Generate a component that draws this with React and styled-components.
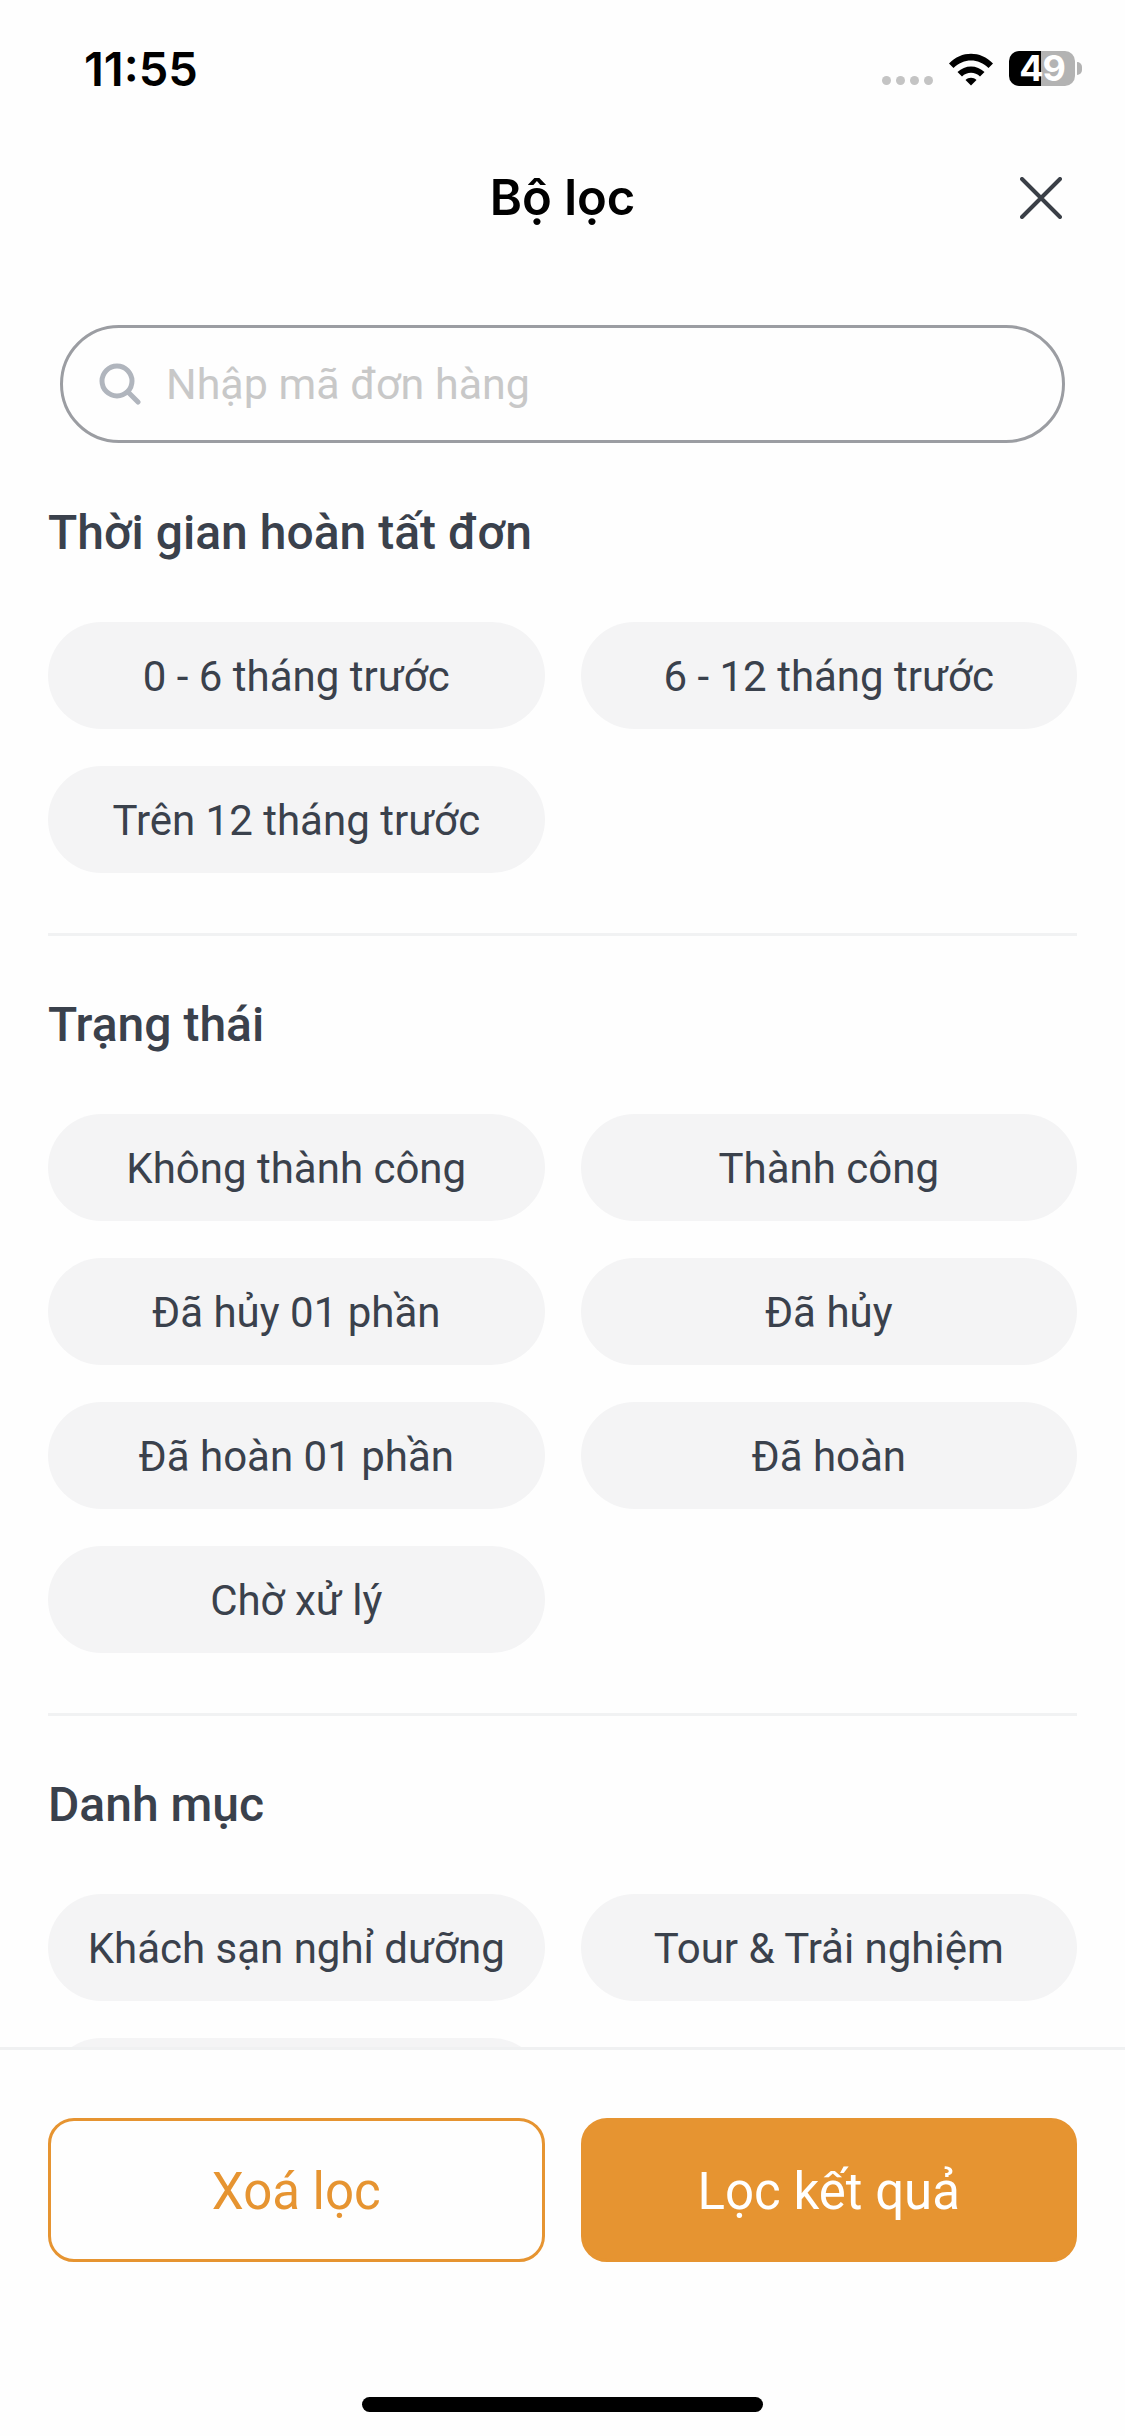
import React from "react";
import styled, { createGlobalStyle } from "styled-components";

const sections = [
	{
		title: "Thời gian hoàn tất đơn",
		chips: ["0 - 6 tháng trước", "6 - 12 tháng trước", "Trên 12 tháng trước"],
	},
	{
		title: "Trạng thái",
		chips: [
			"Không thành công",
			"Thành công",
			"Đã hủy 01 phần",
			"Đã hủy",
			"Đã hoàn 01 phần",
			"Đã hoàn",
			"Chờ xử lý",
		],
	},
	{
		title: "Danh mục",
		chips: ["Khách sạn nghỉ dưỡng", "Tour & Trải nghiệm", ""],
	},
];

const App = () => {
	return (
		<Screen>
			<GlobalStyle />
			<StatusBar>
				<Clock>11:55</Clock>
				<StatusIcons>
					<SignalDots>
						<Dot />
						<Dot />
						<Dot />
						<Dot />
					</SignalDots>
					<svg width="46" height="34" viewBox="0 0 46 34">
						<path d="M1 11.5C13.5 -1.5 32.5 -1.5 45 11.5L40.5 16C30.5 6 15.500 6 5.500 16Z" fill="#000" />
						<path d="M9.500 20C17 12.500 29 12.500 36.500 20L32 24.500C27 19.500 19 19.500 14 24.500Z" fill="#000" />
						<path d="M17.500 28C20.500 25 25.500 25 28.500 28L23 33.500Z" fill="#000" />
					</svg>
					<Battery>
						<BatteryBody>49</BatteryBody>
						<BatteryNub />
					</Battery>
				</StatusIcons>
			</StatusBar>

			<Header>
				<span />
				<Title>Bộ lọc</Title>
				<CloseButton>
					<svg width="42" height="42" viewBox="0 0 42 42">
						<path d="M2 2L40 40M40 2L2 40" stroke="#3a3f47" strokeWidth="4" strokeLinecap="round" />
					</svg>
				</CloseButton>
			</Header>

			<SearchBox>
				<svg width="42" height="42" viewBox="0 0 42 42" fill="none">
					<circle cx="18" cy="18" r="15" stroke="#b0b5bd" strokeWidth="5" />
					<path d="M29 29L39 39" stroke="#b0b5bd" strokeWidth="5" strokeLinecap="round" />
				</svg>
				<Placeholder>Nhập mã đơn hàng</Placeholder>
			</SearchBox>

			<Scroll>
				{sections.map((section) => (
					<Section key={section.title}>
						<SectionTitle>{section.title}</SectionTitle>
						<Chips>
							{section.chips.map((chip, i) => (
								<Chip key={i}>{chip}</Chip>
							))}
						</Chips>
					</Section>
				))}
			</Scroll>

			<Footer>
				<Actions>
					<ClearButton>Xoá lọc</ClearButton>
					<ApplyButton>Lọc kết quả</ApplyButton>
				</Actions>
				<HomeBar />
			</Footer>
		</Screen>
	);
};

const GlobalStyle = createGlobalStyle`
	html, body {
		margin: 0;
		padding: 0;
		background: #fefefe;
	}
	* {
		box-sizing: border-box;
	}
`;

const Screen = styled.div`
	width: 1125px;
	height: 2436px;
	display: flex;
	flex-direction: column;
	overflow: hidden;
	background: #fefefe;
	font-family: Roboto, "Noto Sans", sans-serif;
	color: #3a414c;
`;

const StatusBar = styled.div`
	height: 130px;
	flex-shrink: 0;
	display: flex;
	justify-content: space-between;
	align-items: flex-start;
	padding: 40px 43px 0 84px;
`;

const Clock = styled.div`
	font-family: Inter, sans-serif;
	font-weight: 600;
	font-size: 47px;
	line-height: 58px;
	color: #000;
`;

const StatusIcons = styled.div`
	display: flex;
	align-items: center;
	gap: 15px;
	margin-top: 11px;
`;

const SignalDots = styled.div`
	display: flex;
	gap: 5px;
	margin-top: 24px;
`;

const Dot = styled.span`
	width: 9px;
	height: 9px;
	border-radius: 50%;
	background: #c4c4c4;
`;

const Battery = styled.div`
	display: flex;
	align-items: center;
	gap: 2px;
`;

const BatteryBody = styled.div`
	width: 66px;
	height: 35px;
	border-radius: 10px;
	background: linear-gradient(to right, #000 32px, #b3b3b3 32px);
	color: #fff;
	font-family: Inter, sans-serif;
	font-weight: 700;
	font-size: 36px;
	letter-spacing: -1px;
	line-height: 35px;
	text-align: center;
`;

const BatteryNub = styled.span`
	width: 5px;
	height: 13px;
	border-radius: 0 5px 5px 0;
	background: #b3b3b3;
`;

const Header = styled.div`
	height: 135px;
	flex-shrink: 0;
	display: grid;
	grid-template-columns: 1fr auto 1fr;
	align-items: center;
	padding: 0 63px;
`;

const Title = styled.h1`
	margin: 0;
	font-family: Inter, sans-serif;
	font-weight: 600;
	font-size: 49px;
	color: #000;
`;

const CloseButton = styled.div`
	display: flex;
	justify-content: flex-end;
`;

const SearchBox = styled.div`
	flex-shrink: 0;
	width: 1005px;
	height: 118px;
	margin: 60px 0 0 60px;
	padding-left: 36px;
	display: flex;
	align-items: center;
	gap: 25px;
	border: 3px solid #9b9da2;
	border-radius: 59px;
`;

const Placeholder = styled.span`
	font-size: 43px;
	color: #c8c8c8;
`;

const Scroll = styled.div`
	flex: 1;
	min-height: 0;
	overflow: hidden;
	padding: 56px 48px 0;
`;

const Section = styled.section`
	padding-bottom: 60px;
	margin-bottom: 55px;
	border-bottom: 3px solid #f1f2f3;
`;

const SectionTitle = styled.h2`
	margin: 0 0 55px;
	font-size: 48px;
	font-weight: 500;
	line-height: 68px;
	color: #3a414c;
`;

const Chips = styled.div`
	display: grid;
	grid-template-columns: repeat(2, 1fr);
	gap: 37px 36px;
`;

const Chip = styled.div`
	height: 107px;
	padding-top: 2px;
	border-radius: 54px;
	background: #f4f4f5;
	display: flex;
	align-items: center;
	justify-content: center;
	font-size: 42px;
	color: #3a414c;
`;

const Footer = styled.div`
	height: 389px;
	flex-shrink: 0;
	border-top: 3px solid #f0f1f2;
	background: #fefefe;
	padding: 68px 48px 0;
	display: flex;
	flex-direction: column;
	align-items: center;
`;

const Actions = styled.div`
	width: 100%;
	display: grid;
	grid-template-columns: repeat(2, 1fr);
	gap: 36px;
`;

const ClearButton = styled.div`
	height: 144px;
	padding-top: 3px;
	border: 3px solid #e69431;
	border-radius: 26px;
	display: flex;
	align-items: center;
	justify-content: center;
	font-size: 51px;
	color: #e69431;
`;

const ApplyButton = styled(ClearButton)`
	background: #e69431;
	color: #fff;
`;

const HomeBar = styled.div`
	width: 401px;
	height: 15px;
	margin-top: 135px;
	border-radius: 8px;
	background: #000;
`;

export default App;
